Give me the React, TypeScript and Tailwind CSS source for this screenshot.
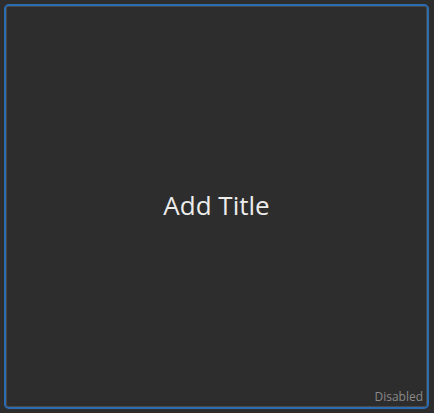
export default function App() {
  return (
    <div className="w-[434px] h-[413px] bg-[#2d2d2d] pl-1 pt-1 pr-[5px] pb-1 flex" style={{ fontFamily: '"Open Sans", "Noto Sans", sans-serif' }}>
      <div className="flex-1 flex border-2 border-[#2b6cb3] rounded-[5px]">
        <div className="flex-1 flex flex-col border border-[#484848] rounded-[3px] bg-[#2d2d2d]">
          <div className="flex-1 flex items-center justify-center pt-[14px]">
            <span className="text-[26px] text-[#ececec] leading-none">Add Title</span>
          </div>
          <div className="flex justify-end pr-[3px] pb-[1px]">
            <span className="text-[12px] leading-[16px] text-[#8a8a8a]">Disabled</span>
          </div>
        </div>
      </div>
    </div>
  );
}
